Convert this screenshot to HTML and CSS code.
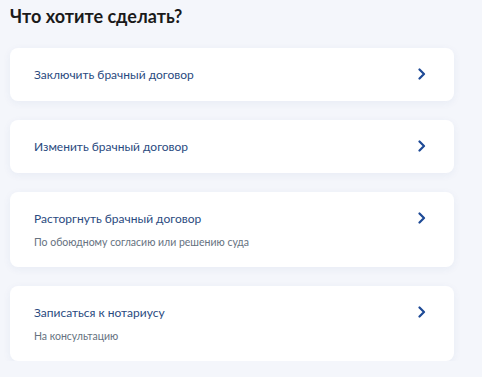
FILE: index.html
```html
<!DOCTYPE html>
<html lang="ru">
<head>
    <meta charset="UTF-8">
    <meta name="viewport" content="width=device-width, initial-scale=1.0">
    <title>Что хотите сделать?</title>
    <link rel="stylesheet" href="styles.css">
</head>
<body>
    <div class="page">
        <h1>Что хотите сделать?</h1>

        <!-- Options -->
        <div class="options">
            <a class="option" href="#">
                <div class="option-text">
                    <div class="option-title">Заключить брачный договор</div>
                </div>
                <svg class="chevron" width="8" height="12" viewBox="0 0 8 12"><path d="M1.5 1.5 L6 6 L1.5 10.5" fill="none" stroke="#1e4a96" stroke-width="2.2" stroke-linecap="round" stroke-linejoin="round"/></svg>
            </a>
            <a class="option" href="#">
                <div class="option-text">
                    <div class="option-title">Изменить брачный договор</div>
                </div>
                <svg class="chevron" width="8" height="12" viewBox="0 0 8 12"><path d="M1.5 1.5 L6 6 L1.5 10.5" fill="none" stroke="#1e4a96" stroke-width="2.2" stroke-linecap="round" stroke-linejoin="round"/></svg>
            </a>
            <a class="option" href="#">
                <div class="option-text">
                    <div class="option-title">Расторгнуть брачный договор</div>
                    <div class="option-sub">По обоюдному согласию или решению суда</div>
                </div>
                <svg class="chevron" width="8" height="12" viewBox="0 0 8 12"><path d="M1.5 1.5 L6 6 L1.5 10.5" fill="none" stroke="#1e4a96" stroke-width="2.2" stroke-linecap="round" stroke-linejoin="round"/></svg>
            </a>
            <a class="option" href="#">
                <div class="option-text">
                    <div class="option-title">Записаться к нотариусу</div>
                    <div class="option-sub">На консультацию</div>
                </div>
                <svg class="chevron" width="8" height="12" viewBox="0 0 8 12"><path d="M1.5 1.5 L6 6 L1.5 10.5" fill="none" stroke="#1e4a96" stroke-width="2.2" stroke-linecap="round" stroke-linejoin="round"/></svg>
            </a>
        </div>
    </div>
</body>
</html>
```

FILE: styles.css
```css
body {
    font-family: Lato, 'Noto Sans', sans-serif;
    background-color: #f4f6fb;
    color: #0b1f33;
    margin: 0;
    padding: 0;
}
.page {
    width: 444px;
    padding: 4px 0 0 10px;
}
h1 {
    font-size: 18px;
    line-height: 24px;
    font-weight: 700;
    margin: 0 0 20px 0;
    color: #1a1a1a;
}
/* Option cards */
.options {
    display: flex;
    flex-direction: column;
    gap: 19px;
}
.option {
    display: flex;
    align-items: flex-start;
    justify-content: space-between;
    background-color: white;
    border-radius: 8px;
    padding: 17px 28px 17px 24px;
    box-shadow: 0 2px 8px rgba(30, 60, 130, 0.06);
    text-decoration: none;
}
.option-title {
    font-size: 12px;
    line-height: 19px;
    color: #2a4a80;
}
.option-sub {
    font-size: 10.5px;
    line-height: 16px;
    color: #66727f;
    margin-top: 6px;
}
.chevron {
    margin-top: 3px;
}
```
